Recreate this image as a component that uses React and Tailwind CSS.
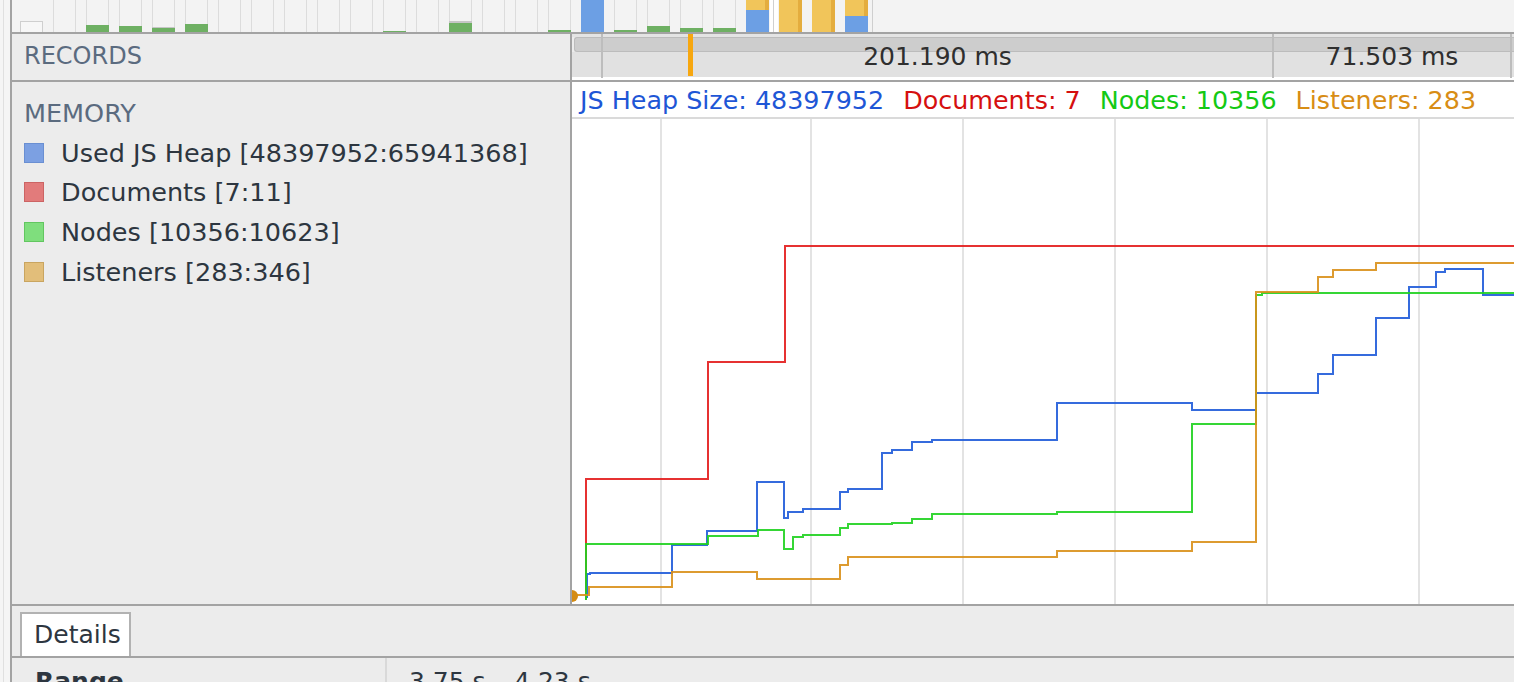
import React from "react";

// overview cells: g = green, gr = gray cap, b = blue, y = yellow (heights in px)
const cells = [
  { box: true },
  {},
  { g: 7 },
  { g: 6 },
  { g: 4, gr: 1 },
  { g: 8 },
  {},
  {},
  {},
  {},
  {},
  { g: 1 },
  {},
  { g: 9, gr: 2 },
  {},
  {},
  { g: 2 },
  { b: 32 },
  { g: 2 },
  { g: 6 },
  { g: 4 },
  { g: 4 },
  { y: 10, b: 22 },
  { y: 32 },
  { y: 32 },
  { y: 16, b: 16 },
];

const gridX = [661, 811, 963, 1115, 1267, 1419];

const series = [
  {
    color: "#e31b1b",
    pts: [[586, 600], [586, 479], [708, 479], [708, 362], [785, 362], [785, 246], [1514, 246]],
  },
  {
    color: "#1f5bd9",
    pts: [
      [587, 598], [587, 574], [590, 574], [590, 573], [672, 573], [672, 545], [707, 545], [707, 531],
      [757, 531], [757, 482], [784, 482], [784, 518], [788, 518], [788, 512], [803, 512], [803, 509],
      [840, 509], [840, 492], [848, 492], [848, 489], [882, 489], [882, 453], [892, 453], [892, 450],
      [912, 450], [912, 442], [932, 442], [932, 440], [1057, 440], [1057, 403], [1192, 403], [1192, 410],
      [1256, 410], [1256, 393], [1318, 393], [1318, 374], [1333, 374], [1333, 355], [1376, 355],
      [1376, 318], [1409, 318], [1409, 287], [1436, 287], [1436, 272], [1445, 272], [1445, 269],
      [1483, 269], [1483, 295], [1514, 295],
    ],
  },
  {
    color: "#1fd21f",
    pts: [
      [586, 600], [586, 544], [708, 544], [708, 536], [758, 536], [758, 530], [784, 530], [784, 549],
      [793, 549], [793, 537], [803, 537], [803, 535], [840, 535], [840, 528], [848, 528], [848, 524],
      [892, 524], [892, 523], [912, 523], [912, 519], [932, 519], [932, 514], [1057, 514], [1057, 512],
      [1192, 512], [1192, 424], [1256, 424], [1256, 295], [1262, 295], [1262, 293], [1514, 293],
    ],
  },
  {
    color: "#d9901a",
    pts: [
      [574, 595], [589, 595], [589, 587], [672, 587], [672, 572], [757, 572], [757, 579], [840, 579],
      [840, 565], [848, 565], [848, 557], [1057, 557], [1057, 551], [1192, 551], [1192, 542],
      [1256, 542], [1256, 292], [1318, 292], [1318, 277], [1333, 277], [1333, 270], [1376, 270],
      [1376, 263], [1514, 263],
    ],
  },
];

const legend = [
  { label: "Used JS Heap [48397952:65941368]", fill: "bg-[#7ca0e2]", border: "border-[#6a8fd2]" },
  { label: "Documents [7:11]", fill: "bg-[#e27b7b]", border: "border-[#cc6464]" },
  { label: "Nodes [10356:10623]", fill: "bg-[#7fde7d]", border: "border-[#62c660]" },
  { label: "Listeners [283:346]", fill: "bg-[#e2be7a]", border: "border-[#c9a560]" },
];

const Overview = () => (
  <svg width={1502} height={32} viewBox="12 0 1502 32" className="block">
    <rect x="12" y="0" width="1502" height="32" fill="#f3f3f3" />
    {cells.map((c, i) => {
      const x = 20 + i * 33;
      let bottom = 32;
      const parts = [];
      if (c.g) {
        parts.push(<rect key="g" x={x} y={bottom - c.g} width="23" height={c.g} fill="#6eb063" />);
        bottom -= c.g;
      }
      if (c.gr) {
        parts.push(<rect key="gr" x={x} y={bottom - c.gr} width="23" height={c.gr} fill="#c6c6c6" />);
      }
      if (c.b) {
        parts.push(<rect key="b" x={x} y={32 - c.b} width="23" height={c.b} fill="#6c9fe4" />);
      }
      if (c.y) {
        parts.push(<rect key="y" x={x} y={0} width="23" height={c.y} fill="#f1c55a" />);
        parts.push(<rect key="yr" x={x + 19} y={0} width="4" height={c.y} fill="#e4ad3e" />);
      }
      return (
        <g key={i}>
          {c.box ? (
            <rect x={x + 0.5} y="21.5" width="22" height="11" fill="#f7f7f7" stroke="#cfcfcf" />
          ) : (
            <>
              <line x1={x + 0.5} y1="0" x2={x + 0.5} y2="32" stroke="#dcdcdc" />
              <line x1={x + 22.5} y1="0" x2={x + 22.5} y2="32" stroke="#dcdcdc" />
            </>
          )}
          {parts}
        </g>
      );
    })}
    <rect x="770" y="0" width="8" height="32" fill="#ffffff" />
    <line x1="773.5" y1="0" x2="773.5" y2="32" stroke="#d0d0d0" />
    <line x1="872.5" y1="0" x2="872.5" y2="32" stroke="#cfcfcf" />
  </svg>
);

const Ruler = () => (
  <div className="relative w-[942px] h-full">
    <div className="flex flex-col h-full">
      <div className="h-[3px] bg-[#e4e4e4]" />
      <div className="h-[15px] ml-[2px] bg-[#cdcdcd] border-y border-l border-[#bcbcbc] rounded-l-[3px]" />
      <div className="flex-1 bg-[#e1e1e1]" />
      <div className="h-[3px] bg-white" />
    </div>
    <div className="absolute inset-x-0 top-0 bottom-[2px] flex text-[25px] leading-[30px] text-[#2f2f2f]">
      <div className="w-[31px] border-r-2 border-[#bdbdbd]" />
      <div className="w-[671px] border-r-2 border-[#bdbdbd] flex justify-center pt-[8px]">201.190 ms</div>
      <div className="w-[238px] border-r-2 border-[#bdbdbd] flex justify-center pt-[8px]">71.503 ms</div>
    </div>
    <div className="absolute left-[116px] top-0 bottom-[4px] w-[5px] bg-[#f7a70f]" />
  </div>
);

const Chart = () => (
  <div className="w-[942px] bg-white flex flex-col">
    <div className="h-[37px] shrink-0 border-b-2 border-[#dadada] flex items-center gap-[19px] pl-[8px] text-[25.4px] leading-[30px] whitespace-nowrap">
      <span className="text-[#1e56d6]">JS Heap Size: 48397952</span>
      <span className="text-[#d50f0f]">Documents: 7</span>
      <span className="text-[#14c914]">Nodes: 10356</span>
      <span className="text-[#d88d15]">Listeners: 283</span>
    </div>
    <svg width={942} height={485} viewBox="572 119 942 485" className="block shrink-0">
      {gridX.map((x) => (
        <line key={x} x1={x} y1="119" x2={x} y2="604" stroke="#e3e3e3" strokeWidth="2" />
      ))}
      {series.map((s) => (
        <polyline
          key={s.color}
          points={s.pts.map((p) => p.join(",")).join(" ")}
          fill="none"
          stroke={s.color}
          strokeWidth="2"
          strokeOpacity="0.9"
        />
      ))}
      <path d="M572 590 A6 6 0 0 1 572 602 Z" fill="#d58c14" />
    </svg>
  </div>
);

export default function App() {
  return (
    <div className="flex w-[1514px] h-[682px] overflow-hidden bg-[#ececec] text-[#2d3640] font-['DejaVu_Sans',sans-serif]">
      <div className="w-[12px] shrink-0 bg-[#f5f5f5] border-r-2 border-[#a3a3a3]">
        <div className="ml-[3px] w-px h-full bg-[#e0e0e0]" />
      </div>

      <div className="flex-1 flex flex-col min-w-0 overflow-hidden">
        <div className="shrink-0 border-b-2 border-[#a3a3a3]">
          <Overview />
        </div>

        <div className="shrink-0 flex h-[48px] border-b-2 border-[#a3a3a3]">
          <div className="w-[558px] pl-[12px] pt-[8px] text-[24px] leading-[29px] text-[#5b6b7f]">RECORDS</div>
          <div className="w-[2px] bg-[#a3a3a3]" />
          <Ruler />
        </div>

        <div className="shrink-0 flex h-[524px] border-b-2 border-[#a3a3a3]">
          <div className="w-[558px] pl-[12px] pt-[11px] text-[25.5px] leading-[30px]">
            <div className="h-[39.7px] flex items-center text-[#5b6b7f]">MEMORY</div>
            {legend.map((l) => (
              <div key={l.label} className="h-[39.7px] flex items-center gap-[17px]">
                <span className={`w-[20px] h-[20px] border ${l.fill} ${l.border}`} />
                <span>{l.label}</span>
              </div>
            ))}
          </div>
          <div className="w-[2px] bg-[#a3a3a3]" />
          <Chart />
        </div>

        <div className="shrink-0 h-[52px] flex items-end border-b-2 border-[#a3a3a3] pl-[8px]">
          <div className="w-[111px] h-[44px] bg-white border-2 border-b-0 border-[#b2b2b2] pl-[12px] flex items-center text-[25px] leading-[30px]">
            Details
          </div>
        </div>

        <div className="flex flex-1 min-h-0 text-[25px] leading-[30px]">
          <div className="w-[375px] border-r-2 border-[#d9d9d9] pl-[23px] pt-[9px] font-bold">Range</div>
          <div className="pl-[22px] pt-[9px]">3.75 s – 4.23 s</div>
        </div>
      </div>
    </div>
  );
}
